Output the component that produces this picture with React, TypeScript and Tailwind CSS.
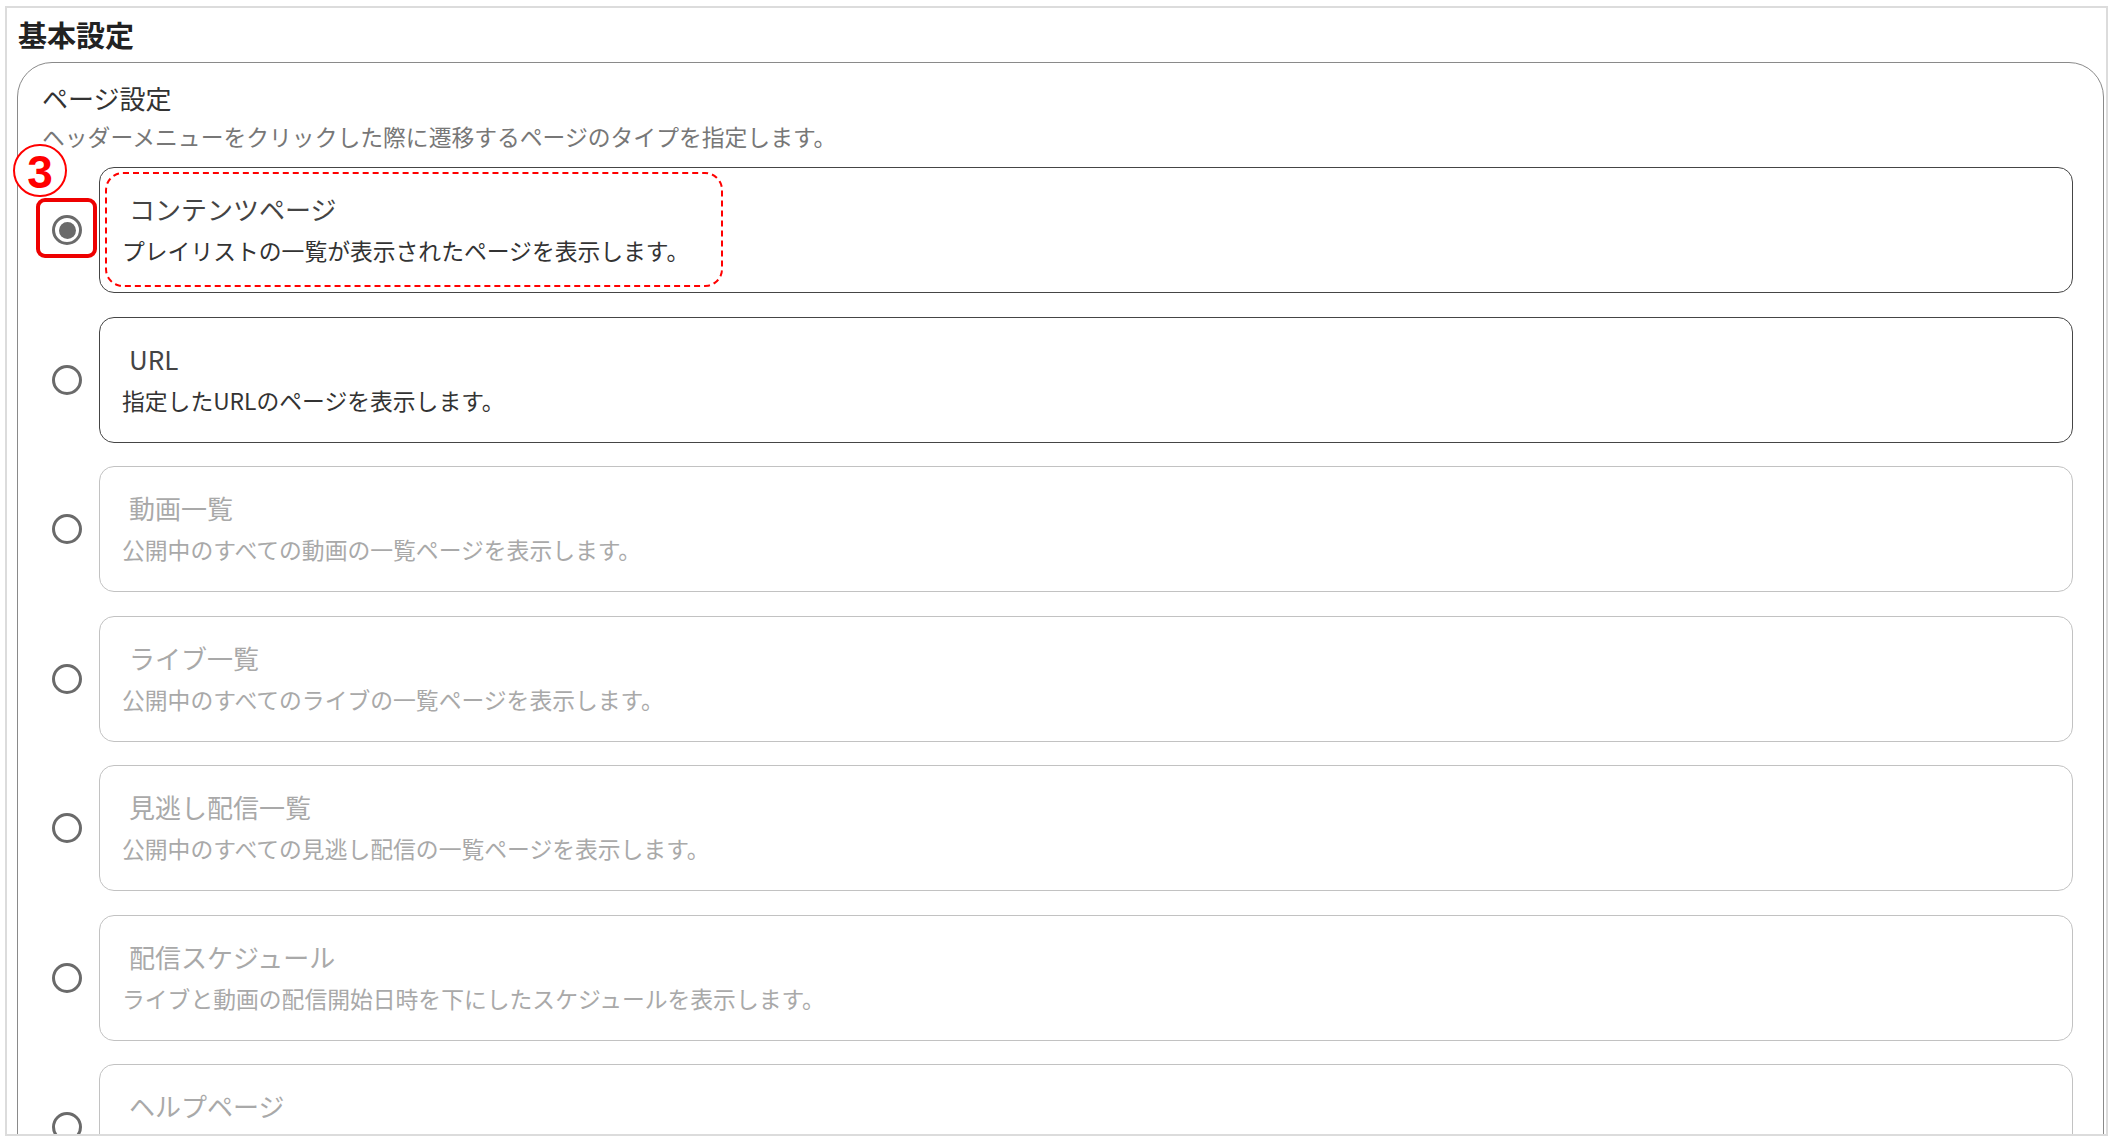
import React from "react";

type Item = { title: string; desc: string; enabled: boolean; checked?: boolean };

const items: Item[] = [
  { title: "コンテンツページ", desc: "プレイリストの一覧が表示されたページを表示します。", enabled: true, checked: true },
  { title: "URL", desc: "指定したURLのページを表示します。", enabled: true },
  { title: "動画一覧", desc: "公開中のすべての動画の一覧ページを表示します。", enabled: false },
  { title: "ライブ一覧", desc: "公開中のすべてのライブの一覧ページを表示します。", enabled: false },
  { title: "見逃し配信一覧", desc: "公開中のすべての見逃し配信の一覧ページを表示します。", enabled: false },
  { title: "配信スケジュール", desc: "ライブと動画の配信開始日時を下にしたスケジュールを表示します。", enabled: false },
  { title: "ヘルプページ", desc: "よくある質問などのヘルプページを表示します。", enabled: false },
];

function Radio({ checked }: { checked?: boolean }) {
  return (
    <div className="w-[30px] h-[30px] shrink-0 rounded-full border-[3px] border-[#6a6a6a] flex items-center justify-center bg-white">
      {checked && <div className="w-[17px] h-[17px] rounded-full bg-[#6a6a6a]" />}
    </div>
  );
}

export default function App() {
  return (
    <div
      className="w-[2113px] h-[1141px] bg-white overflow-hidden"
      style={{ fontFamily: '"Noto Sans CJK JP", "Noto Sans", sans-serif' }}
    >
      <div className="ml-[5px] mt-[6px] w-[2103px] h-[1130px] border-2 border-[#dcdcdc] overflow-hidden">
        <h1 className="pl-[11px] pt-[9px] text-[29px] leading-[34px] font-bold text-[#222]">基本設定</h1>
        <div className="ml-[10px] mt-[11px] w-[2087px] rounded-[35px] border border-[#8a8a8a] pt-[19px] pr-[30px] pb-[40px]">
          <div className="pl-[24px] text-[26px] leading-[32px] text-[#333]">ページ設定</div>
          <div className="pl-[24px] mt-[8px] text-[22.8px] leading-[30px] text-[#777]">
            ヘッダーメニューをクリックした際に遷移するページのタイプを指定します。
          </div>
          <div className="mt-[15px] flex flex-col gap-[23.5px]">
            {items.map((it, i) => (
              <div key={i} className="relative flex items-center">
                <div className="ml-[34px] mr-[17px]">
                  <Radio checked={it.checked} />
                </div>
                <div
                  className={
                    it.enabled
                      ? "flex-1 h-[126px] rounded-[15px] border border-[#454545] pl-[22px] pt-[25px]"
                      : "flex-1 h-[126px] rounded-[15px] border border-[#c2c2c2] pl-[22px] pt-[25px]"
                  }
                >
                  <div
                    className={
                      it.enabled
                        ? "ml-[7px] text-[26px] leading-[32px] text-[#444]"
                        : "ml-[7px] text-[26px] leading-[32px] text-[#a9a9a9]"
                    }
                  >
                    {it.title}
                  </div>
                  <div
                    className={
                      it.enabled
                        ? "mt-[11px] text-[22.8px] leading-[30px] text-[#333]"
                        : "mt-[11px] text-[22.8px] leading-[30px] text-[#a9a9a9]"
                    }
                  >
                    {it.desc}
                  </div>
                </div>
                {i === 0 && (
                  <>
                    <div className="absolute left-[18px] top-[31px] w-[61px] h-[60px] rounded-[9px] border-4 border-[#ee0000]" />
                    <div className="absolute left-[87px] top-[5px] w-[618px] h-[115px] rounded-[18px] border-2 border-dashed border-[#ff0000]" />
                    <div
                      className="absolute left-[-5px] top-[-23px] w-[54px] h-[53px] rounded-full border-2 border-[#ff0000] bg-white flex items-center justify-center text-[46px] leading-none font-bold text-[#ff0000]"
                      style={{ fontFamily: '"Liberation Sans", Arial, sans-serif' }}
                    >
                      <span className="mt-[2px]">3</span>
                    </div>
                  </>
                )}
              </div>
            ))}
          </div>
        </div>
      </div>
    </div>
  );
}
